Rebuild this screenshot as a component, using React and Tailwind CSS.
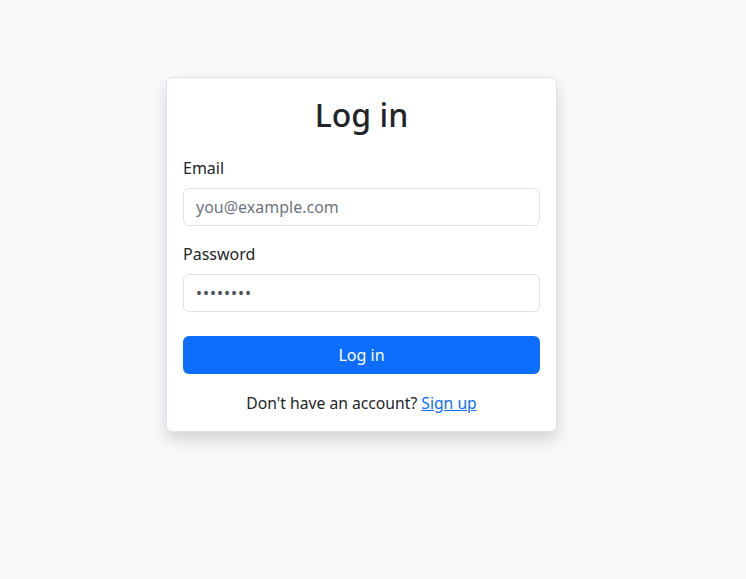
import React from 'react';

const App = () => {
  return (
    <div
      className="min-h-screen bg-[#f8f9fa] pt-[77px] pl-[166px] text-[#212529]"
      style={{ fontFamily: '"Noto Sans", "Open Sans", sans-serif' }}
    >
      {/* Login card */}
      <div className="w-[391px] rounded-md border border-[#dee2e6] bg-white p-4 shadow-[0_8px_16px_rgba(0,0,0,0.15)]">
        <h2 className="mb-[22px] mt-[2px] text-center text-[32px] font-medium leading-[38px]">Log in</h2>

        <form onSubmit={(e) => e.preventDefault()}>
          <div className="mb-4">
            <label className="mb-2 block text-base leading-6">Email</label>
            <input
              type="email"
              placeholder="you@example.com"
              className="block h-[38px] w-full rounded-md border border-[#dee2e6] px-3 text-base text-[#212529] outline-none placeholder:text-[#6c757d]"
            />
          </div>
          <div className="mb-6">
            <label className="mb-2 block text-base leading-6">Password</label>
            <input
              type="password"
              defaultValue="password"
              className="block h-[38px] w-full rounded-md border border-[#dee2e6] px-3 text-base tracking-[1px] text-[#495057] outline-none"
            />
          </div>
          <button
            type="submit"
            className="block h-[38px] w-full rounded-md bg-[#0d6efd] text-base text-white"
          >
            Log in
          </button>
        </form>

        <p className="mt-[17px] text-center text-[15.7px] leading-6">
          Don't have an account?{' '}
          <a href="#" className="text-[#0d6efd] underline">Sign up</a>
        </p>
      </div>
    </div>
  );
};

export default App;
